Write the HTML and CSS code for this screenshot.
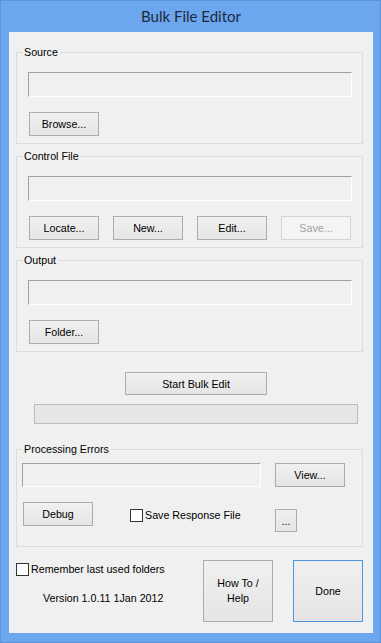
FILE: index.html
```html
<!DOCTYPE html>
<html lang="en">
<head>
<meta charset="UTF-8">
<title>Bulk File Editor</title>
<link rel="stylesheet" href="styles.css">
</head>
<body>

<div class="window">
    <div class="titlebar">Bulk File Editor</div>

    <div class="client">

        <!-- SOURCE -->
        <div class="group">
            <div class="legend">Source</div>
            <div class="field"></div>
            <div class="row">
                <button class="btn">Browse...</button>
            </div>
        </div>

        <!-- CONTROL FILE -->
        <div class="group">
            <div class="legend">Control File</div>
            <div class="field"></div>
            <div class="row">
                <button class="btn">Locate...</button>
                <button class="btn">New...</button>
                <button class="btn">Edit...</button>
                <button class="btn" disabled>Save...</button>
            </div>
        </div>

        <!-- OUTPUT -->
        <div class="group">
            <div class="legend">Output</div>
            <div class="field"></div>
            <div class="row">
                <button class="btn">Folder...</button>
            </div>
        </div>

        <button class="btn start">Start Bulk Edit</button>
        <div class="progress"></div>

        <!-- PROCESSING ERRORS -->
        <div class="group errors">
            <div class="legend">Processing Errors</div>
            <div class="err-row">
                <div class="field"></div>
                <button class="btn">View...</button>
            </div>
            <div class="debug-row">
                <button class="btn">Debug</button>
                <label class="check save-check"><span class="box"></span>Save Response File</label>
                <button class="btn more">...</button>
            </div>
        </div>

        <div class="bottom">
            <div class="bottom-left">
                <label class="check"><span class="box"></span>Remember last used folders</label>
                <div class="version">Version 1.0.11 1Jan 2012</div>
            </div>
            <button class="btn tall">How To /<br>Help</button>
            <button class="btn tall done">Done</button>
        </div>

    </div>
</div>

</body>
</html>
```

FILE: styles.css
```css
* {
    margin: 0;
    padding: 0;
    box-sizing: border-box;
}

body {
    width: 381px;
    height: 643px;
    overflow: hidden;
    font-family: "Liberation Sans", Arial, sans-serif;
    font-size: 10.7px;
    color: #000;
}

.window {
    height: 643px;
    background: #6ca6ee;
    border: 1px solid #5a93dc;
    padding: 0 7px 9px 8px;
}

.titlebar {
    height: 31px;
    line-height: 31px;
    text-align: center;
    font-family: Lato, "Open Sans", sans-serif;
    font-size: 15px;
    color: #1c2b3c;
}

.client {
    height: 601px;
    background: #f0f0f0;
    padding: 20px 10px 0 7px;
}

/* group boxes */
.group {
    border: 1px solid #dcdcdc;
    padding: 0 0 7px 11px;
}

.group + .group {
    margin-top: 12px;
}

.legend {
    width: fit-content;
    margin: -7px 0 0 -6px;
    padding: 0 2px;
    line-height: 13px;
    background: #f0f0f0;
}

.field {
    width: 324px;
    height: 25px;
    margin-top: 13px;
    border: 1px solid;
    border-color: #a0a0a0 #fff #fff #a0a0a0;
    background: #f0f0f0;
}

.row {
    display: flex;
    gap: 14px;
    margin-top: 15px;
    padding-left: 1px;
}

/* buttons */
.btn {
    width: 70px;
    height: 24px;
    border: 1px solid #acacac;
    background: linear-gradient(#f0f0f0, #e5e5e5);
    font: inherit;
    color: #000;
}

.btn:disabled {
    color: #a3a3a3;
    border-color: #d5d5d5;
    background: #f4f4f4;
}

.start {
    display: block;
    width: 142px;
    height: 23px;
    margin: 20px 0 0 109px;
}

.progress {
    width: 324px;
    height: 20px;
    margin: 9px 0 0 18px;
    border: 1px solid #bcbcbc;
    background: #e6e6e6;
}

/* processing errors */
.group.errors {
    margin-top: 25px;
    padding: 0 0 14px 5px;
}

.errors .legend {
    margin-left: 0;
}

.err-row {
    display: flex;
    gap: 14px;
    margin-top: 7px;
}

.err-row .field {
    width: 239px;
    height: 24px;
    margin-top: 0;
}

.debug-row {
    display: flex;
    align-items: flex-start;
    margin-top: 15px;
    padding-left: 1px;
}

.check {
    display: flex;
    align-items: center;
    line-height: 13px;
}

.box {
    width: 13px;
    height: 13px;
    margin-right: 2px;
    border: 1px solid #333;
    background: #fff;
}

.save-check {
    margin: 7px 0 0 37px;
}

.more {
    width: 22px;
    height: 23px;
    margin: 7px 65px 0 auto;
}

/* bottom */
.bottom {
    display: flex;
    margin-top: 13px;
}

.bottom-left {
    width: 187px;
    padding-top: 3px;
}

.version {
    margin: 16px 0 0 27px;
    line-height: 13px;
}

.tall {
    height: 62px;
    line-height: 15px;
}

.done {
    margin-left: 20px;
    border-color: #4c95e0;
}
```
